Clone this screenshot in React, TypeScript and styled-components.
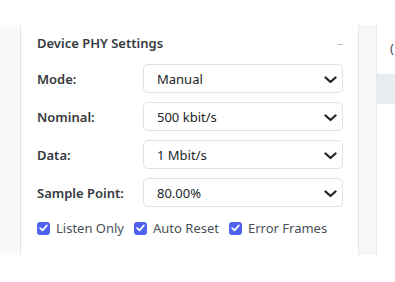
import React from "react";
import styled, { createGlobalStyle } from "styled-components";

const Global = createGlobalStyle`
  html, body { margin: 0; padding: 0; background: #ffffff; }
  body { font-family: "Noto Sans", "Open Sans", Arial, sans-serif; }
  * { box-sizing: border-box; }
`;

const Page = styled.div`
  display: flex;
  width: 395px;
  height: 282px;
  padding-top: 25px;
  padding-bottom: 27px;
`;

const Sidebar = styled.div`
  width: 21px;
  background: #f8f9fa;
  border-right: 1px solid #e3e6e9;
`;

const Panel = styled.section`
  width: 337px;
  padding: 7px 15px 0 16px;
  background: #ffffff;
  display: flex;
  flex-direction: column;
`;

const Header = styled.div`
  display: flex;
  align-items: center;
  justify-content: space-between;
  height: 22px;
  margin-bottom: 10px;
`;

const Title = styled.h3`
  margin: 0;
  font-size: 13px;
  line-height: 18px;
  font-weight: 600;
  color: #343a40;
`;

const Collapse = styled.span`
  font-size: 11px;
  color: #adb5bd;
  margin-top: -2px;
`;

const Rows = styled.div`
  display: flex;
  flex-direction: column;
  gap: 9px;
`;

const Row = styled.div`
  display: flex;
  align-items: center;
`;

const Label = styled.label`
  width: 106px;
  font-size: 13px;
  line-height: 18px;
  font-weight: 600;
  color: #343a40;
`;

const SelectBox = styled.div`
  position: relative;
  width: 200px;
  height: 29px;
  border: 1px solid #dee2e6;
  border-radius: 5px;
  display: flex;
  align-items: center;
  padding-left: 13px;
  font-size: 13px;
  color: #212529;
  background: #ffffff;
`;

const Chevron = styled.svg`
  position: absolute;
  right: 5px;
  top: 11px;
`;

const Checks = styled.div`
  display: flex;
  align-items: center;
  gap: 10px;
  margin-top: 12px;
`;

const CheckItem = styled.label`
  display: flex;
  align-items: center;
  gap: 6px;
  font-size: 13px;
  line-height: 18px;
  color: #495057;
  white-space: nowrap;
  flex-shrink: 0;
`;

const Box = styled.span`
  width: 13px;
  height: 13px;
  border-radius: 3px;
  background: #4f63f0;
  display: flex;
  align-items: center;
  justify-content: center;
`;

const Strip = styled.div`
  width: 19px;
  background: #f6f7f8;
  border-left: 1px solid #e6e8eb;
  border-right: 1px solid #e6e8eb;
`;

const RightPane = styled.div`
  flex: 1;
  display: flex;
  flex-direction: column;
`;

const RightTop = styled.div`
  height: 49px;
  display: flex;
  align-items: center;
  justify-content: flex-end;
  padding-right: 1px;
  padding-bottom: 4px;
  font-size: 13px;
  color: #495057;
`;

const Band = styled.div`
  height: 30px;
  background: #e9ecef;
`;

const fields = [
  { label: "Mode:", value: "Manual" },
  { label: "Nominal:", value: "500 kbit/s" },
  { label: "Data:", value: "1 Mbit/s" },
  { label: "Sample Point:", value: "80.00%" },
];

const checks = ["Listen Only", "Auto Reset", "Error Frames"];

export default function App() {
  return (
    <>
      <Global />
      <Page>
        <Sidebar />
        <Panel>
          <Header>
            <Title>Device PHY Settings</Title>
            <Collapse>–</Collapse>
          </Header>
          <Rows>
            {fields.map((f) => (
              <Row key={f.label}>
                <Label>{f.label}</Label>
                <SelectBox>
                  {f.value}
                  <Chevron width="13" height="8" viewBox="0 0 13 8">
                    <path d="M1.5 1.5 L6.5 6 L11.5 1.5" fill="none" stroke="#212529" strokeWidth="2.3" strokeLinecap="round" strokeLinejoin="round" />
                  </Chevron>
                </SelectBox>
              </Row>
            ))}
          </Rows>
          <Checks>
            {checks.map((c) => (
              <CheckItem key={c}>
                <Box>
                  <svg width="9" height="8" viewBox="0 0 9 8">
                    <path d="M1.2 4.2 L3.5 6.3 L7.8 1.5" fill="none" stroke="#ffffff" strokeWidth="1.8" strokeLinecap="round" strokeLinejoin="round" />
                  </svg>
                </Box>
                {c}
              </CheckItem>
            ))}
          </Checks>
        </Panel>
        <Strip />
        <RightPane>
          <RightTop>(</RightTop>
          <Band />
        </RightPane>
      </Page>
    </>
  );
}
